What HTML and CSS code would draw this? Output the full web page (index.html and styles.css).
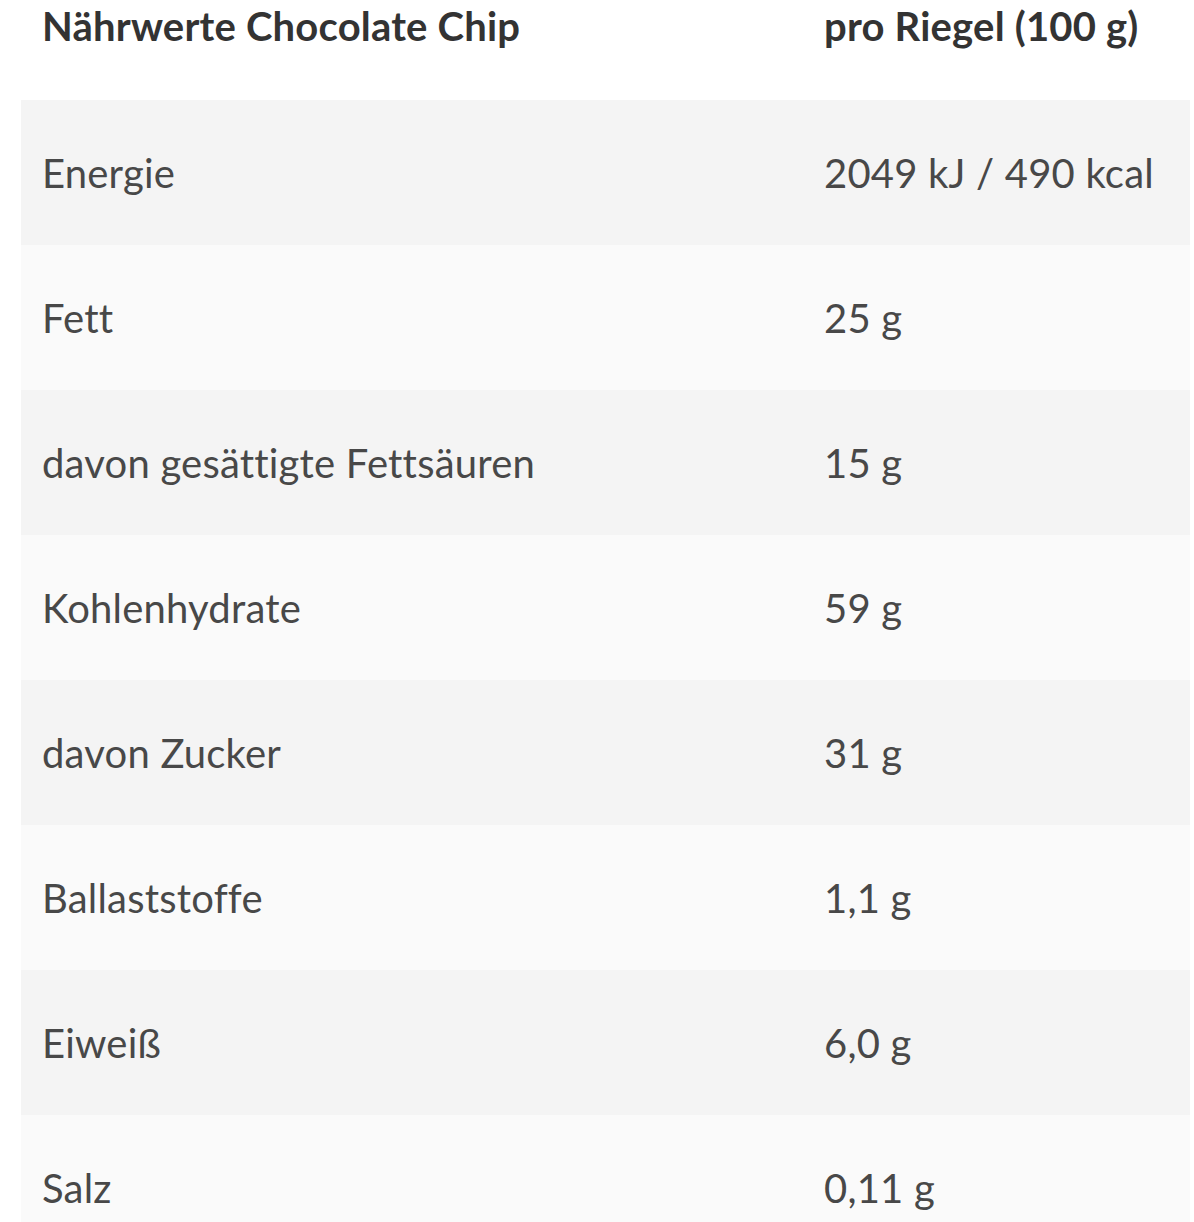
FILE: index.html
```html
<!DOCTYPE html>
<html lang="de">
<head>
<meta charset="utf-8">
<link rel="stylesheet" href="styles.css">
</head>
<body>
<div class="table">
  <div class="row head">
    <div class="cell">Nährwerte Chocolate Chip</div>
    <div class="cell val">pro Riegel (100 g)</div>
  </div>
  <div class="row odd"><div class="cell">Energie</div><div class="cell val">2049 kJ / 490 kcal</div></div>
  <div class="row even"><div class="cell">Fett</div><div class="cell val">25 g</div></div>
  <div class="row odd"><div class="cell">davon gesättigte Fettsäuren</div><div class="cell val">15 g</div></div>
  <div class="row even"><div class="cell">Kohlenhydrate</div><div class="cell val">59 g</div></div>
  <div class="row odd"><div class="cell">davon Zucker</div><div class="cell val">31 g</div></div>
  <div class="row even"><div class="cell">Ballaststoffe</div><div class="cell val">1,1 g</div></div>
  <div class="row odd"><div class="cell">Eiweiß</div><div class="cell val">6,0 g</div></div>
  <div class="row even"><div class="cell">Salz</div><div class="cell val">0,11 g</div></div>
</div>
</body>
</html>
```
FILE: styles.css
```css
html, body {
  margin: 0;
  padding: 0;
  background: #ffffff;
}
body {
  font-family: Lato, "Open Sans", sans-serif;
  color: #484848;
  font-size: 40px;
  letter-spacing: 0.2px;
}
.table {
  display: flex;
  flex-direction: column;
  margin: 0 4px 0 21px;
}
.row {
  display: grid;
  grid-template-columns: 782px 1fr;
  height: 145px;
  align-items: center;
}
.cell {
  padding-left: 21px;
  white-space: nowrap;
}
.head {
  height: 100px;
  align-items: start;
  font-weight: 700;
  color: #333333;
}
.head .cell {
  padding-top: 2px;
}
.odd { background: #f4f4f4; }
.even { background: #fafafa; }
```
